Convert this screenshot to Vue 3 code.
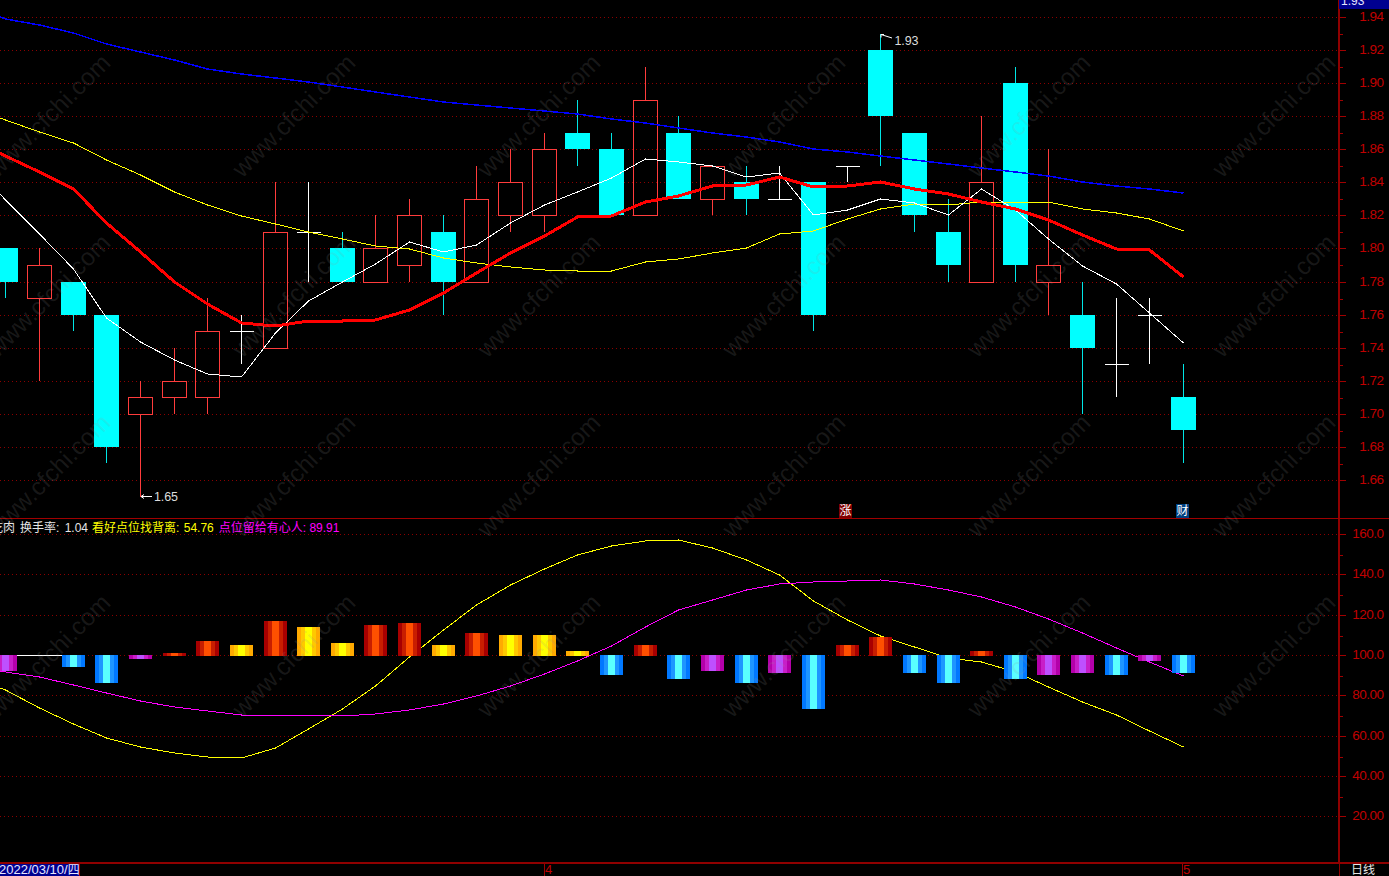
<script setup>
// candle centres along the time axis
const slots = [5, 39, 73, 106, 140, 174, 207, 241, 275, 308, 342, 375, 409, 443, 476, 510, 544, 577, 611, 645, 678, 712, 746, 779, 813, 847, 880, 914, 948, 981, 1015, 1048, 1082, 1116, 1149, 1183]
const xAt = (i) => slots[i]
const priceY = (p) => Math.round(17 + (1.94 - p) * 1653.5)

// open, close, high, low
const rows = [
  [1.80, 1.78, 1.80, 1.77], [1.77, 1.79, 1.80, 1.72], [1.78, 1.76, 1.78, 1.75], [1.76, 1.68, 1.76, 1.67],
  [1.70, 1.71, 1.72, 1.65], [1.71, 1.72, 1.74, 1.70], [1.71, 1.75, 1.77, 1.70], [1.75, 1.75, 1.76, 1.73],
  [1.74, 1.81, 1.84, 1.74], [1.81, 1.81, 1.84, 1.78], [1.80, 1.78, 1.81, 1.78], [1.78, 1.80, 1.82, 1.78],
  [1.79, 1.82, 1.83, 1.78], [1.81, 1.78, 1.82, 1.76], [1.78, 1.83, 1.85, 1.78], [1.82, 1.84, 1.86, 1.81],
  [1.82, 1.86, 1.87, 1.81], [1.87, 1.86, 1.89, 1.85], [1.86, 1.82, 1.87, 1.82], [1.82, 1.89, 1.91, 1.82],
  [1.87, 1.83, 1.88, 1.83], [1.83, 1.85, 1.85, 1.82], [1.84, 1.83, 1.85, 1.82], [1.83, 1.83, 1.85, 1.83],
  [1.84, 1.76, 1.84, 1.75], [1.85, 1.85, 1.85, 1.84], [1.92, 1.88, 1.93, 1.85], [1.87, 1.82, 1.87, 1.81],
  [1.81, 1.79, 1.83, 1.78], [1.78, 1.84, 1.88, 1.78], [1.90, 1.79, 1.91, 1.78], [1.78, 1.79, 1.86, 1.76],
  [1.76, 1.74, 1.78, 1.70], [1.73, 1.73, 1.77, 1.71], [1.76, 1.76, 1.77, 1.73], [1.71, 1.69, 1.73, 1.67]
]

const candles = rows.map(([o, c, h, l], i) => {
  const top = priceY(Math.max(o, c))
  const bottom = priceY(Math.min(o, c))
  const kind = o === c ? 'flat' : c > o ? 'up' : 'down'
  return { i, x: xAt(i) + 0.5, top, bottom, high: priceY(h), low: priceY(l), kind }
})

// every line runs in from the left edge of the window
const points = (startY, ys) => `0,${startY} ` + ys.map((y, i) => `${xAt(i) + 0.5},${y}`).join(' ')

const whiteLine = points(194, [200, 234, 269, 318, 342, 360, 374, 377, 333, 301, 282, 264, 242, 252, 245, 223, 205, 192, 178, 159, 162, 166, 177, 173, 215, 210, 199, 203, 215, 189, 210, 239, 266, 284, 313, 343])
const redLine = points(153, [156, 172, 189, 223, 252, 282, 304, 323, 326, 321, 321, 320, 310, 293, 273, 253, 236, 217, 216, 202, 196, 186, 185, 177, 187, 186, 182, 189, 194, 202, 209, 220, 235, 249, 250, 277])
const yellowLine = points(118, [120, 132, 143, 160, 175, 192, 205, 216, 224, 232, 239, 246, 249, 258, 263, 267, 270, 271, 271, 262, 259, 253, 248, 234, 231, 219, 209, 204, 205, 202, 202, 202, 209, 213, 219, 231])
const blueLine = points(17, [19, 25, 33, 44, 52, 60, 69, 74, 78, 82, 87, 92, 97, 102, 105, 108, 111, 114, 119, 123, 128, 133, 137, 142, 149, 152, 156, 160, 164, 168, 172, 176, 182, 186, 189, 193])

const lowerY = (y) => y - 519
const subYellow = points(lowerY(688), [690, 708, 724, 738, 747, 753, 757, 758, 748, 729, 709, 686, 657, 630, 605, 585, 569, 555, 546, 541, 540, 548, 560, 575, 601, 620, 636, 647, 658, 662, 672, 687, 702, 715, 731, 747].map(lowerY))
const subMagenta = points(lowerY(671), [672, 677, 685, 693, 701, 707, 711, 715, 715, 715, 716, 714, 710, 704, 696, 686, 674, 661, 646, 627, 610, 600, 590, 584, 582, 581, 580, 584, 590, 597, 607, 619, 633, 648, 662, 676].map(lowerY))

const palettes = {
  red: ['#a80000', '#c81e00', '#ff5000'],
  gold: ['#ffaa00', '#ffc800', '#ffff00'],
  blue: ['#0078ff', '#1e96ff', '#5affff'],
  violet: ['#b400aa', '#c81ec8', '#be50ff']
}

// kind, far end of the bar (the zero line is y=655)
const bars = [
  ['violet', 670], null, ['blue', 666], ['blue', 682], ['violet', 658], ['red', 653], ['red', 641], ['gold', 645],
  ['red', 621], ['gold', 627], ['gold', 643], ['red', 625], ['red', 623], ['gold', 645], ['red', 633], ['gold', 635],
  ['gold', 635], ['gold', 651], ['blue', 674], ['red', 645], ['blue', 678], ['violet', 670], ['blue', 682], ['violet', 672],
  ['blue', 708], ['red', 645], ['red', 637], ['blue', 672], ['blue', 682], ['red', 651], ['blue', 678], ['violet', 674],
  ['violet', 672], ['blue', 674], ['violet', 660], ['blue', 672]
]

const stripeWidths = [4, 4, 7, 4, 4]
const stripeColors = [0, 1, 2, 1, 0]

const barStripes = []
bars.forEach((bar, i) => {
  if (!bar) return
  const [name, end] = bar
  let x = xAt(i) - 11
  stripeWidths.forEach((w, s) => {
    barStripes.push({
      key: `${i}-${s}`,
      x,
      y: lowerY(Math.min(end, 655)),
      w,
      h: Math.abs(end - 655) + 1,
      fill: palettes[name][stripeColors[s]]
    })
    x += w
  })
})

const mainGrid = Array.from({ length: 15 }, (_, k) => Math.round(17 + 33.07 * k) + 0.5)
const subGrid = [534, 574, 615, 655, 695, 736, 776, 816].map((y) => y - 519 + 0.5)

const mainLabels = ['1.94', '1.92', '1.90', '1.88', '1.86', '1.84', '1.82', '1.80', '1.78', '1.76', '1.74', '1.72', '1.70', '1.68', '1.66']
const subLabels = ['160.0', '140.0', '120.0', '100.0', '80.00', '60.00', '40.00', '20.00']

const minorMain = mainGrid.slice(0, -1).map((y, k) => (y + mainGrid[k + 1]) / 2)
const minorSub = subGrid.slice(0, -1).map((y, k) => Math.round((y + subGrid[k + 1]) / 2) + 0.5)

const watermarks = []
for (const y of [117, 297, 477, 657]) {
  for (const x of [50, 295, 540, 785, 1030, 1275]) {
    watermarks.push({ x, y })
  }
}
</script>

<template>
  <div class="terminal">
    <div class="panel main-panel">
      <svg class="chart" width="1339" height="518" viewBox="0 0 1339 518">
        <line v-for="y in mainGrid" :key="y" x1="0" x2="1338" :y1="y" :y2="y" class="grid" />

        <g v-for="c in candles" :key="c.i">
          <template v-if="c.kind === 'up'">
            <line :x1="c.x" :x2="c.x" :y1="c.high" :y2="c.top" class="wick-up" />
            <line :x1="c.x" :x2="c.x" :y1="c.bottom" :y2="c.low" class="wick-up" />
            <rect :x="c.x - 12" :y="c.top + 0.5" width="24" :height="c.bottom - c.top" class="body-up" />
          </template>
          <template v-else-if="c.kind === 'down'">
            <line :x1="c.x" :x2="c.x" :y1="c.high" :y2="c.low" class="wick-down" />
            <rect :x="c.x - 12.5" :y="c.top" width="25" :height="c.bottom - c.top" class="body-down" />
          </template>
          <template v-else>
            <line :x1="c.x" :x2="c.x" :y1="c.high" :y2="c.low" class="wick-flat" />
            <line :x1="c.x - 12" :x2="c.x + 12" :y1="c.top + 0.5" :y2="c.top + 0.5" class="wick-flat" />
          </template>
        </g>

        <polyline :points="blueLine" class="ma ma-blue" />
        <polyline :points="yellowLine" class="ma ma-yellow" />
        <polyline :points="whiteLine" class="ma ma-white" />
        <polyline :points="redLine" class="ma ma-red" />

        <path d="M141 496.5H152M141 496.5l3-2M141 496.5l3 2" class="note-arrow" />
        <text x="154" y="501" class="note">1.65</text>
        <path d="M881 34.5L892 38M881 34.5v3M881 34.5h3" class="note-arrow" />
        <text x="894.5" y="45" class="note">1.93</text>

        <rect x="839" y="504" width="13" height="14" fill="#800000" />
        <text x="845.5" y="515" class="flag">涨</text>
        <rect x="1176" y="504" width="13" height="14" fill="#004080" />
        <text x="1182.5" y="515" class="flag">财</text>
      </svg>
      <svg class="axis" width="50" height="518" viewBox="0 0 50 518">
        <line v-for="y in mainGrid" :key="y" x1="0" x2="6" :y1="y" :y2="y" class="tick" />
        <line v-for="y in minorMain" :key="y" x1="0" x2="3" :y1="y" :y2="y" class="tick" />
        <text v-for="(label, k) in mainLabels" :key="label" x="43.5" :y="mainGrid[k] + 3" class="scale">{{ label }}</text>
      </svg>
      <div class="price-tag">1.93</div>
    </div>

    <div class="panel sub-panel">
      <svg class="chart" width="1339" height="343" viewBox="0 0 1339 343">
        <line v-for="y in subGrid" :key="y" x1="0" x2="1338" :y1="y" :y2="y" class="grid" />
        <line x1="6" x2="73" y1="136.5" y2="136.5" class="zero" />
        <polyline :points="subYellow" class="ma ma-yellow" />
        <polyline :points="subMagenta" class="ma ma-magenta" />
        <rect v-for="s in barStripes" :key="s.key" :x="s.x" :y="s.y" :width="s.w" :height="s.h" :fill="s.fill" shape-rendering="crispEdges" />
      </svg>
      <svg class="axis" width="50" height="343" viewBox="0 0 50 343">
        <line v-for="y in subGrid" :key="y" x1="0" x2="6" :y1="y" :y2="y" class="tick" />
        <line v-for="y in minorSub" :key="y" x1="0" x2="3" :y1="y" :y2="y" class="tick" />
        <text v-for="(label, k) in subLabels" :key="label" x="43.5" :y="subGrid[k] + 3.5" class="scale">{{ label }}</text>
      </svg>
      <div class="legend">
        <span class="name">吃肉</span>
        <span class="white">换手率: 1.04</span>
        <span class="yellow">看好点位找背离: 54.76</span>
        <span class="magenta">点位留给有心人: 89.91</span>
      </div>
    </div>

    <div class="time-bar">
      <div class="date"><span class="date-text">2022/03/10/<span class="weekday">四</span></span></div>
      <div class="months">
        <span class="month first">4</span>
        <span class="month second">5</span>
      </div>
      <div class="period">日线</div>
    </div>

    <svg class="watermark" width="1389" height="876" viewBox="0 0 1389 876">
      <text
        v-for="w in watermarks"
        :key="`${w.x}-${w.y}`"
        :transform="`translate(${w.x} ${w.y}) rotate(-45)`"
      >www.cfchi.com</text>
    </svg>
  </div>
</template>

<style scoped>
.terminal {
  position: relative;
  width: 1389px;
  height: 876px;
  background: #000;
  overflow: hidden;
  font-family: "Liberation Sans", "Noto Sans CJK SC", sans-serif;
}

.panel {
  position: relative;
  display: flex;
  border-bottom: 1px solid #a00000;
}

.main-panel {
  height: 518px;
}

.sub-panel {
  height: 343px;
  border-bottom-width: 2px;
  border-bottom-color: #8f0000;
}

.chart {
  display: block;
  flex: none;
}

.axis {
  display: block;
  flex: none;
  border-left: 2px solid #8f0000;
  margin-left: -1px;
}

.grid {
  stroke: #8b0000;
  stroke-width: 1;
  stroke-dasharray: 1 3;
  shape-rendering: crispEdges;
}

.tick {
  stroke: #a00000;
  stroke-width: 1;
  shape-rendering: crispEdges;
}

.scale {
  fill: #c00000;
  font-size: 13.5px;
  letter-spacing: -0.5px;
  text-anchor: end;
}

.wick-up,
.body-up {
  stroke: #ff3c3c;
  stroke-width: 1;
  shape-rendering: crispEdges;
}

.body-up {
  fill: #000;
  fill-opacity: 0;
}

.wick-down {
  stroke: #00e6e6;
  stroke-width: 1;
  shape-rendering: crispEdges;
}

.body-down {
  fill: #00ffff;
  shape-rendering: crispEdges;
}

.wick-flat {
  stroke: #fff;
  stroke-width: 1;
  shape-rendering: crispEdges;
}

.ma {
  fill: none;
  stroke-width: 1;
  shape-rendering: crispEdges;
}

.ma-blue {
  stroke: #0000ff;
  stroke-width: 1.5;
}

.ma-yellow {
  stroke: #ffff00;
}

.ma-white {
  stroke: #fff;
}

.ma-magenta {
  stroke: #ff00ff;
}

.ma-red {
  stroke: #ff0000;
  stroke-width: 3;
}

.zero {
  stroke: #fff;
  stroke-width: 1;
  shape-rendering: crispEdges;
}

.note {
  fill: #dcdcdc;
  font-size: 12.5px;
  letter-spacing: -0.1px;
}

.note-arrow {
  fill: none;
  stroke: #fff;
  stroke-width: 1;
}

.flag {
  fill: #fff;
  font-size: 12px;
  text-anchor: middle;
}

/* the highest price tag is cut by the window top */
.price-tag {
  position: absolute;
  right: 0;
  top: 0;
  width: 48px;
  height: 9px;
  padding-left: 2px;
  overflow: hidden;
  background: #000090;
  color: #e6e6ff;
  font-size: 12px;
  line-height: 2px;
}

.legend {
  position: absolute;
  left: -9px;
  top: 1px;
  display: flex;
  font-size: 12px;
  line-height: 17px;
  white-space: nowrap;
}

.name,
.white {
  color: #e6e6e6;
}

.white {
  margin-left: 5px;
  word-spacing: 2px;
}

.yellow {
  margin-left: 4px;
  word-spacing: 1px;
  color: #ffff00;
}

.magenta {
  margin-left: 5px;
  color: #ff00ff;
}

.time-bar {
  display: flex;
  height: 14px;
  font-size: 13px;
  line-height: 12px;
}

.date {
  flex: none;
  width: 79px;
  background: #000090;
  color: #e6e6ff;
  border-right: 1px solid #a00000;
  white-space: nowrap;
  overflow: hidden;
}

.date-text {
  margin-left: -1px;
  display: inline-block;
}

.weekday {
  font-size: 12px;
}

.months {
  position: relative;
  flex: none;
  width: 1259px;
  color: #c00000;
}

.month {
  position: absolute;
  top: 0;
  height: 14px;
  border-left: 1px solid #a00000;
}

.first {
  left: 464px;
}

.second {
  left: 1102px;
}

.period {
  flex: 1;
  border-left: 1px solid #8f0000;
  padding-left: 11px;
  color: #e6e6e6;
  font-size: 12px;
}

.watermark {
  position: absolute;
  left: 0;
  top: 0;
  pointer-events: none;
}

.watermark text {
  fill: rgba(150, 150, 150, 0.17);
  font-size: 24.5px;
  text-anchor: middle;
  dominant-baseline: middle;
}
</style>

<style>
html,
body {
  margin: 0;
  background: #000;
  overflow: hidden;
}
</style>
